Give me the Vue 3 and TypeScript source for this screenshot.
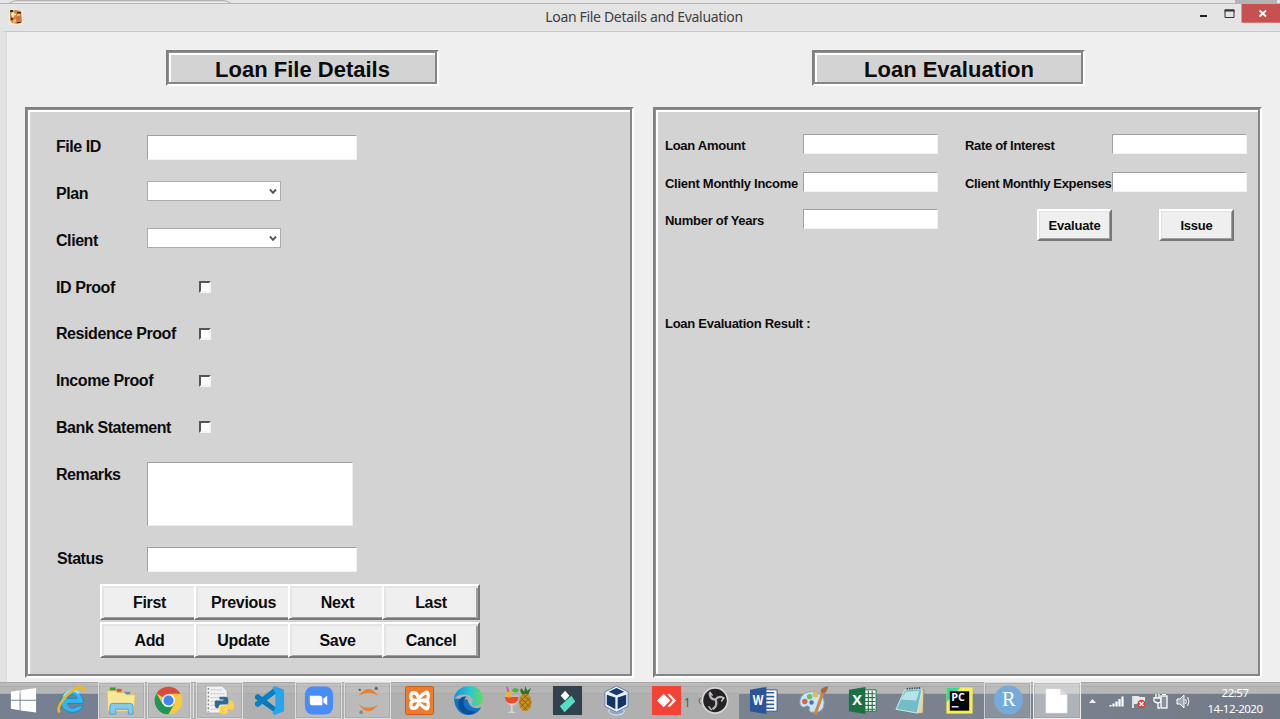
<script setup lang="ts">
interface Field { label: string }

const proofs: string[] = ['ID Proof', 'Residence Proof', 'Income Proof', 'Bank Statement']
const combos: string[] = ['Plan', 'Client']
const actions: string[] = ['First', 'Previous', 'Next', 'Last', 'Add', 'Update', 'Save', 'Cancel']
const leftFields: Field[] = [{ label: 'Loan Amount' }, { label: 'Client Monthly Income' }, { label: 'Number of Years' }]
const rightFields: Field[] = [{ label: 'Rate of Interest' }, { label: 'Client Monthly Expenses' }]
</script>

<template>
  <div class="screen">
    <header class="titlebar">
      <svg class="top-edge" width="1280" height="5" viewBox="0 0 1280 5">
        <rect width="1280" height="5" fill="#e6e6e6" />
        <path d="M9 3.5Q12 .7 17 .7H223Q228 .7 231 3.5" fill="#ececec" stroke="#a5a5a5" />
        <rect x="1235" width="42" height="3" fill="#b4b4b4" />
        <path d="M0 3.5H1280" stroke="#b5b5b5" />
      </svg>
      <svg class="app-icon" width="14" height="16" viewBox="0 0 14 16">
        <rect width="14" height="16" fill="#f3eadf" />
        <path d="M1 2L7 1 12 2 13 13 9 15 3 14 1 11Z" fill="#c98645" />
        <path d="M1 1H4V3H1ZM8 3H12V4.500H8ZM2 9H4V11H2ZM8 13H12V14H8Z" fill="#4b2c19" />
        <path d="M4 3V8M2 5.500H7" stroke="#fff6b8" stroke-width="1.700" />
        <path d="M7 8L11 7 12 11 8 12Z" fill="#e8683d" />
        <path d="M4 11L7 10 7 13 4 14ZM8 5H11V7H8Z" fill="#eebc6d" />
      </svg>
      <span class="title">Loan File Details and Evaluation</span>
      <div class="window-controls">
        <svg width="81" height="19" viewBox="0 0 81 19">
          <path d="M1 12H8" stroke="#222" stroke-width="2" />
          <path d="M26 6H35V13.500H26Z" fill="none" stroke="#333" />
          <path d="M25.500 6.500H35.500" stroke="#333" stroke-width="2" />
          <rect x="42.500" width="39" height="18.700" fill="#c75050" />
          <path d="M60.500 6.500L67 12.500M67 6.500L60.500 12.500" stroke="#fff" stroke-width="1.800" />
        </svg>
      </div>
    </header>

    <main class="client">
      <section class="column">
        <h1 class="heading">Loan File Details</h1>
        <div class="panel details">
          <div class="row"><label>File ID</label><input class="entry" type="text" /></div>
          <div v-for="c in combos" :key="c" class="row">
            <label>{{ c }}</label>
            <div class="combo">
              <svg width="8" height="7" viewBox="0 0 8 7"><path d="M1 1.500L4 4.800 7 1.500" fill="none" stroke="#555" stroke-width="1.900" /></svg>
            </div>
          </div>
          <div v-for="p in proofs" :key="p" class="row">
            <label>{{ p }}</label><span class="check"></span>
          </div>
          <div class="row remarks"><label>Remarks</label><textarea class="memo"></textarea></div>
          <div class="row status"><label>Status</label><input class="entry" type="text" /></div>
          <div class="actions">
            <button v-for="a in actions" :key="a" class="action">{{ a }}</button>
          </div>
        </div>
      </section>

      <section class="column second">
        <h1 class="heading">Loan Evaluation</h1>
        <div class="panel evaluation">
          <div class="fields">
            <div v-for="f in leftFields" :key="f.label" class="field first">
              <label>{{ f.label }}</label><input class="entry small" type="text" />
            </div>
          </div>
          <div class="fields">
            <div v-for="f in rightFields" :key="f.label" class="field last">
              <label>{{ f.label }}</label><input class="entry small" type="text" />
            </div>
            <div class="eval-buttons">
              <button class="push">Evaluate</button>
              <button class="push">Issue</button>
            </div>
          </div>
          <p class="result">Loan Evaluation Result :</p>
        </div>
      </section>
    </main>

    <footer class="taskbar">
      <div class="apps">
        <!-- Start -->
        <div class="app"><svg class="icon" viewBox="0 0 32 32"><path d="M4 7L13 5.500V15.300H4ZM14 5.300L30 3V15.300H14ZM4 16.300H13V26L4 24.500ZM14 16.300H30V28.500L14 26.200Z" fill="#fff" /></svg></div>
        <!-- Internet Explorer -->
        <div class="app"><svg class="icon" viewBox="0 0 32 32">
          <path d="M28.500 19H12C12.500 24 19 25.500 22 21.500H28C24 32 5 30 5 17 5 2 28 1 28.500 19ZM12 14H21.500C21 8.500 12.500 8.500 12 14Z" fill="#35b5eb" stroke="#1688c8" />
          <path d="M8 12C11 5 20 4 24 9" fill="none" stroke="#a3e3fb" stroke-width="2" />
          <path d="M4 28C-1 25 8 12 17 6 23 1.500 30 0 28.500 7" fill="none" stroke="#edb91d" stroke-width="2.600" />
        </svg></div>
        <!-- File Explorer -->
        <div class="app open"><svg class="icon" viewBox="0 0 32 32">
          <path d="M1 4H9L11 6H22V8H30V26H1Z" fill="#e2bd5b" />
          <path d="M4 2.500H10V6H4Z" fill="#3f9a3d" /><path d="M11 4H16V7H11Z" fill="#d45833" /><path d="M19 7H25V10H19Z" fill="#4898cc" />
          <path d="M1 6H10L12 8H19L21 10H30L29 27H2Z" fill="#f8e69b" stroke="#d8ba60" stroke-width=".7" />
          <path d="M4 30V22Q4 19 7 19H25Q28 19 28 22V30H23V25H10V30Z" fill="#83c9e8" stroke="#4ba3d0" />
        </svg></div>
        <!-- Chrome -->
        <div class="app open stacked"><svg class="icon" viewBox="0 0 32 32">
          <circle cx="16" cy="16" r="14.300" fill="#f9ca3d" />
          <path d="M16 16L3.600 8.800A14.300 14.300 0 0 1 28.400 9H16Z" fill="#d94b3d" />
          <path d="M3.600 8.800A14.300 14.300 0 0 0 16 30.300L22 19.500 10 19.500Z" fill="#219756" />
          <circle cx="16" cy="16" r="6.800" fill="#f4f4f4" /><circle cx="16" cy="16" r="5.200" fill="#4285f4" />
        </svg></div>
        <!-- Python script -->
        <div class="app open"><svg class="icon" viewBox="0 0 32 32">
          <path d="M2 1H19L24 6V29H2Z" fill="#f2f2f2" stroke="#aaa" />
          <path d="M7 5H18M7 9H21M7 13H18M7 17H16M7 21H15M7 25H14" stroke="#bbb" stroke-dasharray="2 1" /><path d="M4.500 3V28" stroke="#888" stroke-width="1.500" stroke-dasharray="2 2" />
          <path d="M16 12H22Q25 12 25 15V18Q25 20 22 20H18Q15 20 15 24H13Q11 23 11 19T14 16H20V15H16Z" fill="#326994" />
          <path d="M26 16H28Q31 17 31 22T28 25H21V26H25V29Q21 32 16 29V24Q16 21 20 21H23Q26 21 26 18Z" fill="#ffd344" />
        </svg></div>
        <!-- Visual Studio Code -->
        <div class="app slight"><svg class="icon" viewBox="0 0 32 32">
          <path d="M1 11L4 9 25 25 22 29 1 14Z" fill="#0878b9" /><path d="M1 21L4 23 25 7 22 2 1 18Z" fill="#087fc2" />
          <path d="M21 1L31 5V27L21 31 19 29 22 24V8L19 3Z" fill="#24a5ec" />
        </svg></div>
        <!-- Zoom -->
        <div class="app open"><svg class="icon" viewBox="0 0 32 32"><rect x="2" y="1.500" width="29" height="29" rx="8" fill="#498cf5" /><path d="M7 11H17Q20 11 20 14V21H10Q7 21 7 18ZM21 14L25 11V21L21 18Z" fill="#fff" /></svg></div>
        <!-- Jupyter -->
        <div class="app open"><svg class="icon" viewBox="0 0 32 32">
          <path d="M7 11Q17-3 27 11Q17 5 7 11ZM7 20Q17 34 27 20Q17 27 7 20Z" fill="#ee7d2e" />
          <circle cx="25" cy="3.500" r="1.700" fill="#666" /><circle cx="8" cy="5" r="1.200" fill="#555" /><circle cx="9.500" cy="28" r="1.900" fill="#888" />
        </svg></div>
        <!-- XAMPP -->
        <div class="app late"><svg class="icon" viewBox="0 0 32 32"><rect x="1.500" y="1.500" width="29" height="29" rx="2" fill="#ee7a2d" stroke="#c75c16" /><path d="M13 16H19M13 16Q7 16 7 12T10 8 14 11 16 13 18 11 22 8 25 12 19 16M13 16Q7 16 7 20T10 24 14 21 16 19 18 21 22 24 25 20 19 16" fill="none" stroke="#fff" stroke-width="3.500" stroke-linecap="round" /></svg></div>
        <!-- Edge -->
        <div class="app late"><svg class="icon" viewBox="0 0 32 32">
          <defs><linearGradient id="edgeTop"><stop stop-color="#168fd2" /><stop offset=".55" stop-color="#2cc5d4" /><stop offset="1" stop-color="#67da59" /></linearGradient></defs>
          <path d="M1 14C2 26 8 31 16 31 22 31 27 28 29 23 22 26 16 22 15 15Z" fill="#1273c4" />
          <path d="M1 15C2-3 31-4 31 14 31 22 22 23 19 20 22 17 20 11 14 10 8 9 3 11 1 15Z" fill="url(#edgeTop)" />
          <path d="M14 12C8 16 10 28 24 27 18 33 10 30 7 25 3 18 7 11 14 12Z" fill="#0c4e9b" />
        </svg></div>
        <!-- Fruit cocktail -->
        <div class="app late"><svg class="icon" viewBox="0 0 32 32">
          <path d="M22 11Q17 6 20 3L23 7 24 1 26 6 30 3 27 10Z" fill="#386d28" />
          <ellipse cx="24" cy="18" rx="6.500" ry="9" fill="#c68c25" /><path d="M19 13L29 23M18 18L26 26M22 10L30 18M29 13L19 23M26 10L18 18M30 18L22 26" stroke="#795515" stroke-width=".8" />
          <path d="M3 11H17Q17 20 11 21V27L15 29H5L9 27V21Q3 19 3 11Z" fill="#d9d2cf" /><path d="M3 12H17Q17 19 10 19T3 12Z" fill="#e84c2b" />
          <path d="M5 2L9 14" stroke="#e0529a" stroke-width="2" /><circle cx="7" cy="10" r="3" fill="#efb42d" /><path d="M10 6Q12 1 18 5Q15 10 10 6Z" fill="#53ad48" />
        </svg></div>
        <!-- Filmora -->
        <div class="app late shift"><svg class="icon" viewBox="0 0 32 32"><rect x="1" y="1" width="30" height="30" fill="#31424d" /><path d="M9 11L13.500 6 18 11 13.500 16Z" fill="#fff" /><path d="M8 22L20 11 24 17 13 28Z" fill="#55dfc2" /></svg></div>
        <!-- VirtualBox -->
        <div class="app late"><svg class="icon" viewBox="0 0 32 32">
          <ellipse cx="16" cy="27" rx="8" ry="4" fill="#93a9c8" stroke="#e0e7f0" />
          <path d="M4 7L16 1 28 7V22L16 28 4 22Z" fill="#e9eef5" stroke="#6580a8" /><path d="M8 7L16 3 24 7 16 10.500Z" fill="#163a70" /><path d="M6 10L14.800 13V25L6 20ZM26 10L17.200 13V25L26 20Z" fill="#143464" />
        </svg></div>
        <!-- AnyDesk -->
        <div class="app late anydesk"><svg class="icon" viewBox="0 0 32 32"><rect x="1" y="1" width="30" height="30" fill="#f44336" /><path d="M6 16L13 9 20 16 13 23ZM17 10L19 9 26 16 19 23 17 22 22.500 16Z" fill="#fff" /></svg><span class="count">1</span></div>
        <!-- OBS -->
        <div class="app late"><svg class="icon" viewBox="0 0 32 32">
          <path d="M2 13Q-2 16 2 20" fill="none" stroke="#555" />
          <circle cx="16.500" cy="16" r="13" fill="#242225" stroke="#d7d7d7" stroke-width="1.700" />
          <path d="M17 15Q11 15 11 8M17 15Q21 10 26 14M17 15Q20 21 14 25" fill="none" stroke="#bbb9bb" stroke-width="2.300" /><path d="M11 7L14 11M26 13L23 17M13 26L10 22" stroke="#c6c6c6" stroke-width="1.500" />
        </svg></div>
        <!-- Word -->
        <div class="app late"><svg class="icon" viewBox="0 0 32 32"><path d="M16 5H30V27H16Z" fill="#fff" stroke="#315b9f" /><path d="M18 8H27M18 12H27M18 16H27M18 20H27M18 24H27" stroke="#315b9f" stroke-width="1.600" /><path d="M2 5L19 2V30L2 27Z" fill="#2a5699" /><text x="10.500" y="20.500" class="letter" textLength="11" lengthAdjust="spacingAndGlyphs">W</text></svg></div>
        <!-- Paint -->
        <div class="app late"><svg class="icon" viewBox="0 0 32 32">
          <path d="M2 16Q4 6 16 7 27 9 27 18 27 29 16 28 10 29 12 23 10 20 6 23 1 22 2 16Z" fill="#c7e5f5" stroke="#7da7c0" />
          <circle cx="7" cy="17" r="2.800" fill="#dc6257" /><circle cx="12" cy="12" r="2.800" fill="#74bb62" /><circle cx="18" cy="10" r="2.700" fill="#eab650" /><circle cx="14" cy="18" r="2.300" fill="#3f78ae" />
          <path d="M16 30L24 8 27 9 19 31Z" fill="#cf8744" /><path d="M24 8Q21 3 31 1Q31 6 27 9Z" fill="#a9693d" />
        </svg></div>
        <!-- Excel -->
        <div class="app late"><svg class="icon" viewBox="0 0 32 32"><path d="M16 5H30V27H16Z" fill="#fff" stroke="#217346" /><path d="M18 9H29M18 13H29M18 17H29M18 21H29M18 25H29M22 6V27M26 6V27" stroke="#217346" stroke-width="1.200" /><path d="M2 5L19 2V30L2 27Z" fill="#1d7044" /><text x="10.500" y="21" class="letter big">X</text></svg></div>
        <!-- Notepad -->
        <div class="app slight"><svg class="icon" viewBox="0 0 32 32"><path d="M25 4L30 5 29 29 22 30Z" fill="#e3d4a0" stroke="#8d8164" /><path d="M10 5L28 4 23 29 1 25Z" fill="#73bdc9" stroke="#d5e9ea" /><path d="M11 7L25 6 22 16 6 15Z" fill="#b5e3e8" /><path d="M12 4L27 3" stroke="#465156" stroke-width="2" stroke-dasharray="1.500 1" /></svg></div>
        <!-- PyCharm -->
        <div class="app slight"><svg class="icon" viewBox="0 0 32 32"><rect x="2.500" y="2.500" width="27" height="27" fill="#f6ef51" /><path d="M2.500 2.500H17L2.500 18Z" fill="#43d39a" /><rect x="6" y="6.500" width="20" height="20" fill="#050505" /><text x="14.500" y="16" class="letter pc" textLength="14" lengthAdjust="spacingAndGlyphs">PC</text><path d="M8 22.500H15" stroke="#fff" stroke-width="1.400" /></svg></div>
        <!-- RStudio -->
        <div class="app open dim"><svg class="icon" viewBox="0 0 32 32"><circle cx="17" cy="15.500" r="15" fill="#75aadb" /><text x="17.300" y="22" class="serif">R</text></svg></div>
        <!-- Untitled document -->
        <div class="app open current"><svg class="icon" viewBox="0 0 32 32"><path d="M5 4H20L27 10V29H5Z" fill="#fff" stroke="#ddd" stroke-width=".6" /><path d="M20 4V10H27Z" fill="#d8d8d8" /></svg></div>
      </div>
      <svg class="tray" width="102" height="20" viewBox="0 0 102 20">
        <path d="M0 12L3.500 8 7 12Z" fill="#f4f4f4" />
        <path d="M21.500 15.500V14M24.500 15.500V12.500M27.500 15.500V10.500M30.500 15.500V8M33.500 15.500V5.500" stroke="#fff" stroke-width="2.200" />
        <path d="M44 5V17" stroke="#fff" stroke-width="1.500" /><path d="M45 5H49L51 6H56V13H45Z" fill="#e9e9e9" /><circle cx="52.500" cy="13" r="4.200" fill="#d6453d" /><path d="M50.500 11L54.500 15M54.500 11L50.500 15" stroke="#fff" stroke-width="1.300" />
        <path d="M67 3V7M70 3V7M65 7H72V10Q71 12 69 12T65 10ZM69 12V17H71" fill="none" stroke="#fff" stroke-width="1.300" /><rect x="72" y="5" width="6" height="12" fill="#87909b" stroke="#fff" stroke-width="1.300" /><path d="M73 3.500H77" stroke="#fff" />
        <path d="M88 8H91L95 4V17L91 13H88Z" fill="#a1a7ae" stroke="#fff" /><path d="M96.500 8Q98 10.500 96.500 13M98.700 6Q101 10.500 98.700 15" fill="none" stroke="#fff" />
      </svg>
      <div class="clock"><span>22:57</span><span>14-12-2020</span></div>
    </footer>
  </div>
</template>

<style>
body { margin: 0; overflow: hidden; }
</style>

<style scoped>
* { box-sizing: border-box; }
.screen { width: 1280px; height: 719px; display: flex; flex-direction: column; background: #efefef; font-family: "Liberation Sans", Arial, sans-serif; color: #0c0c0c; overflow: hidden; }
.titlebar { position: relative; height: 31px; flex: none; background: #e4e4e4; }
.top-edge { position: absolute; left: 0; top: 0; }
.app-icon { position: absolute; left: 9px; top: 9px; }
.title { display: block; padding-top: 7px; width: 1288px; text-align: center; font: 14px/19px "Noto Sans", "Open Sans", sans-serif; letter-spacing: -.33px; color: #404040; white-space: nowrap; }
.window-controls { position: absolute; right: 0; top: 4px; display: flex; }
.client { height: 651px; flex: none; display: flex; padding: 18px 18px 0 19px; gap: 19px; border-left: 6px solid #e2e2e2; border-top: 1px solid #c8c8c8; box-shadow: inset 1px 0 #ddd; }
.column { width: 609px; display: flex; flex-direction: column; }
.heading { width: 273px; height: 36px; margin: 0 0 21px 141px; font-size: 22px; line-height: 35px; text-align: center; font-weight: bold; background: #d3d3d3; white-space: nowrap; }
.second .heading { margin-left: 159px; padding-left: 1px; }
.heading, .panel { border: 2px solid; border-color: #808080 #fff #fff #808080; box-shadow: inset 1px 1px #909090, inset -2px -2px #858585, inset 3px 3px #fff; }
.panel { height: 571px; background: #d3d3d3; }
.details { padding: 14px 0 0 29px; }
.row { display: flex; height: 46.850px; font-size: 16px; letter-spacing: -.43px; font-weight: bold; }
.row label { width: 91px; line-height: 48px; white-space: nowrap; }
.entry { width: 210px; height: 25px; margin: 12px 0 0; padding: 0 4px; border: 1px solid; border-color: #a0a0a0 #f2f2f2 #f2f2f2 #a0a0a0; background: #fff; outline: 0; border-radius: 0; }
.combo { width: 134px; height: 20px; margin-top: 11.500px; border: 1px solid #acacac; background: #fff; display: flex; justify-content: flex-end; align-items: center; padding-right: 3px; }
.check { width: 12px; height: 12px; margin: 17.300px 0 0 52px; background: #fff; border: 2px solid; border-color: #555 #f3f3f3 #f3f3f3 #555; }
.remarks { height: 84px; }
.memo { width: 206px; height: 64px; margin-top: 11px; border: 1px solid; border-color: #a0a0a0 #eee #eee #a0a0a0; background: #fff; resize: none; outline: 0; border-radius: 0; }
.status { height: 49px; }
.status label { padding-left: 1px; }
.actions { display: grid; grid-template-columns: 94px 94px 94px 98px; grid-template-rows: 36px 36px; row-gap: 1.500px; margin: .300px 0 0 44px; }
.action, .push { font-family: inherit; font-weight: bold; color: #0c0c0c; background: #efefef; padding: 0; border-radius: 0; }
.action { font-size: 16px; letter-spacing: -.3px; border: 2px solid; border-color: #fff #777 #777 #fff; box-shadow: inset 2px 2px #e4e4e4, inset 0 -1px #a0a0a0; padding: 2px 0 0 3px; }
.action:not(:nth-child(4n)) { border-right: 0; }
.action:nth-child(4n) { box-shadow: inset 2px 2px #e4e4e4, inset -2px -1px #a0a0a0; padding: 2px 0 0; }
.evaluation { display: grid; grid-template-columns: 300px 1fr; grid-template-rows: 189px 40px; padding: 17px 0 0 10px; align-content: start; }
.fields { display: flex; flex-direction: column; }
.field { display: flex; height: 37.500px; font-size: 13px; letter-spacing: -.27px; font-weight: bold; }
.field label { width: 138px; line-height: 39px; white-space: nowrap; }
.field.last label { width: 147px; letter-spacing: -.32px; }
.entry.small { width: 135px; height: 20px; margin-top: 8px; }
.eval-buttons { display: flex; gap: 47px; margin: 8px 0 0 72px; }
.push { width: 75px; height: 32px; font-size: 13px; letter-spacing: -.2px; padding-top: 1px; border: 2px solid; border-color: #fff #777 #777 #fff; box-shadow: inset 1px 1px #e2e2e2, inset -1px -1px #a0a0a0; }
.result { margin: 0; font-size: 13px; letter-spacing: -.27px; font-weight: bold; line-height: 17px; }
.taskbar { height: 37px; flex: none; display: flex; align-items: center; background: linear-gradient(#a9a9a9 0 1px, #bababa 1px 4px, #aaa 4px 5px, #b6b6b6 5px 11px, #9d9d9d 12px, transparent 12px), linear-gradient(90deg, #778090 0 98px, #b0b0b0 98px 739px, #79828e 739px 1040px, #737a87 1280px); }
.apps { display: grid; grid-template-columns: repeat(22, 49.250px); width: 1083.500px; flex: none; margin-left: -2px; height: 37px; }
.app { display: flex; align-items: center; justify-content: center; height: 37px; }
.late { padding-left: 5px; }
.slight { padding-left: 2px; }
.shift { padding-left: 7px; }
.icon { width: 31px; height: 31px; flex: none; display: block; overflow: visible; }
.open { margin: 0 1px 0 1px; border: 1px solid rgba(238,238,238,.65); background: rgba(220,220,220,.25); outline: 1px solid rgba(120,120,120,.22); outline-offset: -2px; }
.stacked { margin-right: 4px; box-shadow: 3px 0 0 -1px #bbb, 4px 0 0 -1px #ddd; }
.dim { background: rgba(210,210,210,.2); }
.current { background: rgba(235,235,235,.48); border-color: #eee; }
.anydesk { position: relative; padding-left: 7px; }
.count { position: absolute; right: -3px; top: 12px; font: 12px "Noto Sans", sans-serif; color: #555; }
.letter { font: bold 14px "Open Sans", sans-serif; fill: #fff; text-anchor: middle; }
.big { font-size: 15px; }
.pc { font-size: 10px; }
.serif { font: 21px "Liberation Serif", serif; fill: #fff; text-anchor: middle; }
.tray { margin-left: 7px; flex: none; }
.clock { display: flex; flex-direction: column; align-items: center; margin: 0 0 0 17px; font: 11.500px/16px "Noto Sans", sans-serif; letter-spacing: -.5px; color: #fff; white-space: nowrap; }
</style>
